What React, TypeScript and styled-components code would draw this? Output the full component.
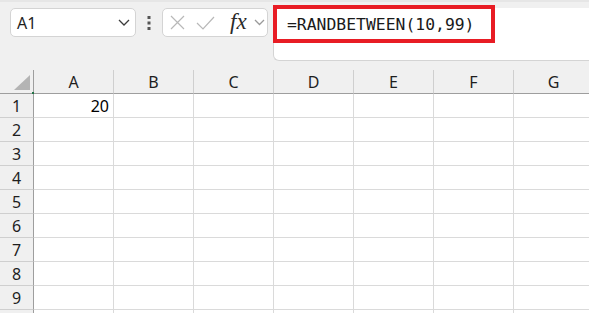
import React from 'react';
import styled, { createGlobalStyle } from 'styled-components';

const GlobalStyle = createGlobalStyle`
  html, body {
    margin: 0;
    padding: 0;
    background: #f0f0f0;
    font-family: "Noto Sans", "Open Sans", sans-serif;
    overflow: hidden;
  }
`;

const Page = styled.div`
  width: 589px;
  height: 313px;
  background: #f0f0f0;
  border-top: 2px solid #e6e6e6;
  box-sizing: border-box;
  overflow: hidden;
`;

const Toolbar = styled.div`
  display: flex;
  align-items: flex-start;
  padding-top: 6px;
  height: 60px;
`;

const NameBox = styled.div`
  margin-left: 10px;
  width: 126px;
  height: 29px;
  box-sizing: border-box;
  background: #fff;
  border: 1px solid #d4d4d4;
  border-radius: 5px;
  display: flex;
  align-items: center;
  justify-content: space-between;
  padding: 0 5px 0 6px;
  font-size: 16px;
  color: #1e1e1e;
`;

const Grip = styled.div`
  width: 26px;
  height: 29px;
  display: flex;
  align-items: center;
  justify-content: center;
`;

const FuncBox = styled.div`
  width: 106px;
  height: 29px;
  box-sizing: border-box;
  background: #fff;
  border: 1px solid #d4d4d4;
  border-radius: 5px;
  display: flex;
  align-items: center;
  padding: 0 0 0 7px;
  color: #b8b8b8;
`;

const IconSlot = styled.span<{ $w: number; $ml?: number }>`
  width: ${(p) => p.$w}px;
  margin-left: ${(p) => p.$ml ?? 0}px;
  display: flex;
  align-items: center;
  justify-content: center;
`;

const Fx = styled.span`
  font-family: "Liberation Serif", serif;
  font-style: italic;
  font-size: 23px;
  color: #2a2a2a;
  margin-left: 15px;
  width: 20px;
  line-height: 1;
  margin-top: -3px;
`;

const FormulaBar = styled.div`
  flex: 1;
  margin-left: 5px;
  height: 53px;
  box-sizing: border-box;
  background: #fff;
  border-left: 1px solid #d4d4d4;
  border-bottom: 1px solid #d4d4d4;
  border-bottom-left-radius: 6px;
`;

const Formula = styled.div`
  width: 222px;
  height: 38px;
  box-sizing: border-box;
  margin: -3px 0 0 -1px;
  border: 4px solid #e81c24;
  padding-left: 10px;
  display: flex;
  align-items: center;
  font-family: "DejaVu Sans Mono", "Liberation Mono", monospace;
  font-size: 16.4px;
  color: #1a1a1a;
`;

const Sheet = styled.div`
  margin-top: 2px;
  display: grid;
  grid-template-columns: 34px repeat(7, 80px);
  grid-auto-rows: 24px;
`;

const Corner = styled.div`
  position: relative;
  background: #f0f0f0;
  border-right: 1px solid #9e9e9e;
  border-bottom: 1px solid #9e9e9e;
  box-sizing: border-box;

  &::before {
    content: '';
    position: absolute;
    right: 3px;
    bottom: 3px;
    width: 0;
    height: 0;
    border-left: 16px solid transparent;
    border-bottom: 15px solid #b4b4b4;
  }

  &::after {
    content: '';
    position: absolute;
    right: -1px;
    bottom: -1px;
    width: 2px;
    height: 2px;
    background: #217346;
  }
`;

const ColHead = styled.div`
  background: #f0f0f0;
  border-right: 1px solid #cfcfcf;
  border-bottom: 1px solid #9e9e9e;
  box-sizing: border-box;
  display: flex;
  align-items: center;
  justify-content: center;
  font-size: 16px;
  color: #1e1e1e;
`;

const RowHead = styled.div`
  background: #f0f0f0;
  border-right: 1px solid #9e9e9e;
  border-bottom: 1px solid #cfcfcf;
  box-sizing: border-box;
  display: flex;
  align-items: center;
  justify-content: center;
  font-size: 16px;
  color: #1e1e1e;
`;

const Cell = styled.div<{ $num?: boolean }>`
  background: #fff;
  border-right: 1px solid #dadada;
  border-bottom: 1px solid #dadada;
  box-sizing: border-box;
  display: flex;
  align-items: center;
  justify-content: ${(p) => (p.$num ? 'flex-end' : 'flex-start')};
  padding: 0 4px;
  font-size: 16px;
  color: #000;
`;

const Chevron = ({ w, color }: { w: number; color: string }) => (
  <svg width={w} height={w / 2 + 2} viewBox={`0 0 ${w} ${w / 2 + 2}`}>
    <polyline
      points={`1,1 ${w / 2},${w / 2} ${w - 1},1`}
      fill="none"
      stroke={color}
      strokeWidth="1.3"
    />
  </svg>
);

const columns = ['A', 'B', 'C', 'D', 'E', 'F', 'G'];
const rows = [1, 2, 3, 4, 5, 6, 7, 8, 9, 10];

const App: React.FC = () => {
  return (
    <Page>
      <GlobalStyle />
      <Toolbar>
        <NameBox>
          A1
          <Chevron w={12} color="#3c3c3c" />
        </NameBox>
        <Grip>
          <svg width="4" height="14" viewBox="0 0 4 14">
            <rect x="0.5" y="0" width="3" height="3" fill="#555" />
            <rect x="0.5" y="5.5" width="3" height="3" fill="#555" />
            <rect x="0.5" y="11" width="3" height="3" fill="#555" />
          </svg>
        </Grip>
        <FuncBox>
          <IconSlot $w={15}>
            <svg width="15" height="15" viewBox="0 0 15 15">
              <path d="M1 1 14 14 M14 1 1 14" stroke="#b8b8b8" strokeWidth="1.2" fill="none" />
            </svg>
          </IconSlot>
          <IconSlot $w={19} $ml={11}>
            <svg width="19" height="14" viewBox="0 0 19 14">
              <polyline points="1,7 7,13 18,1" stroke="#b8b8b8" strokeWidth="1.2" fill="none" />
            </svg>
          </IconSlot>
          <Fx>fx</Fx>
          <IconSlot $w={12} $ml={3}>
            <Chevron w={11} color="#9a9a9a" />
          </IconSlot>
        </FuncBox>
        <FormulaBar>
          <Formula>=RANDBETWEEN(10,99)</Formula>
        </FormulaBar>
      </Toolbar>
      <Sheet>
        <Corner />
        {columns.map((c) => (
          <ColHead key={c}>{c}</ColHead>
        ))}
        {rows.map((r) => (
          <React.Fragment key={r}>
            <RowHead>{r}</RowHead>
            {columns.map((c) => (
              <Cell key={c} $num={r === 1 && c === 'A'}>
                {r === 1 && c === 'A' ? '20' : ''}
              </Cell>
            ))}
          </React.Fragment>
        ))}
      </Sheet>
    </Page>
  );
};

export default App;
